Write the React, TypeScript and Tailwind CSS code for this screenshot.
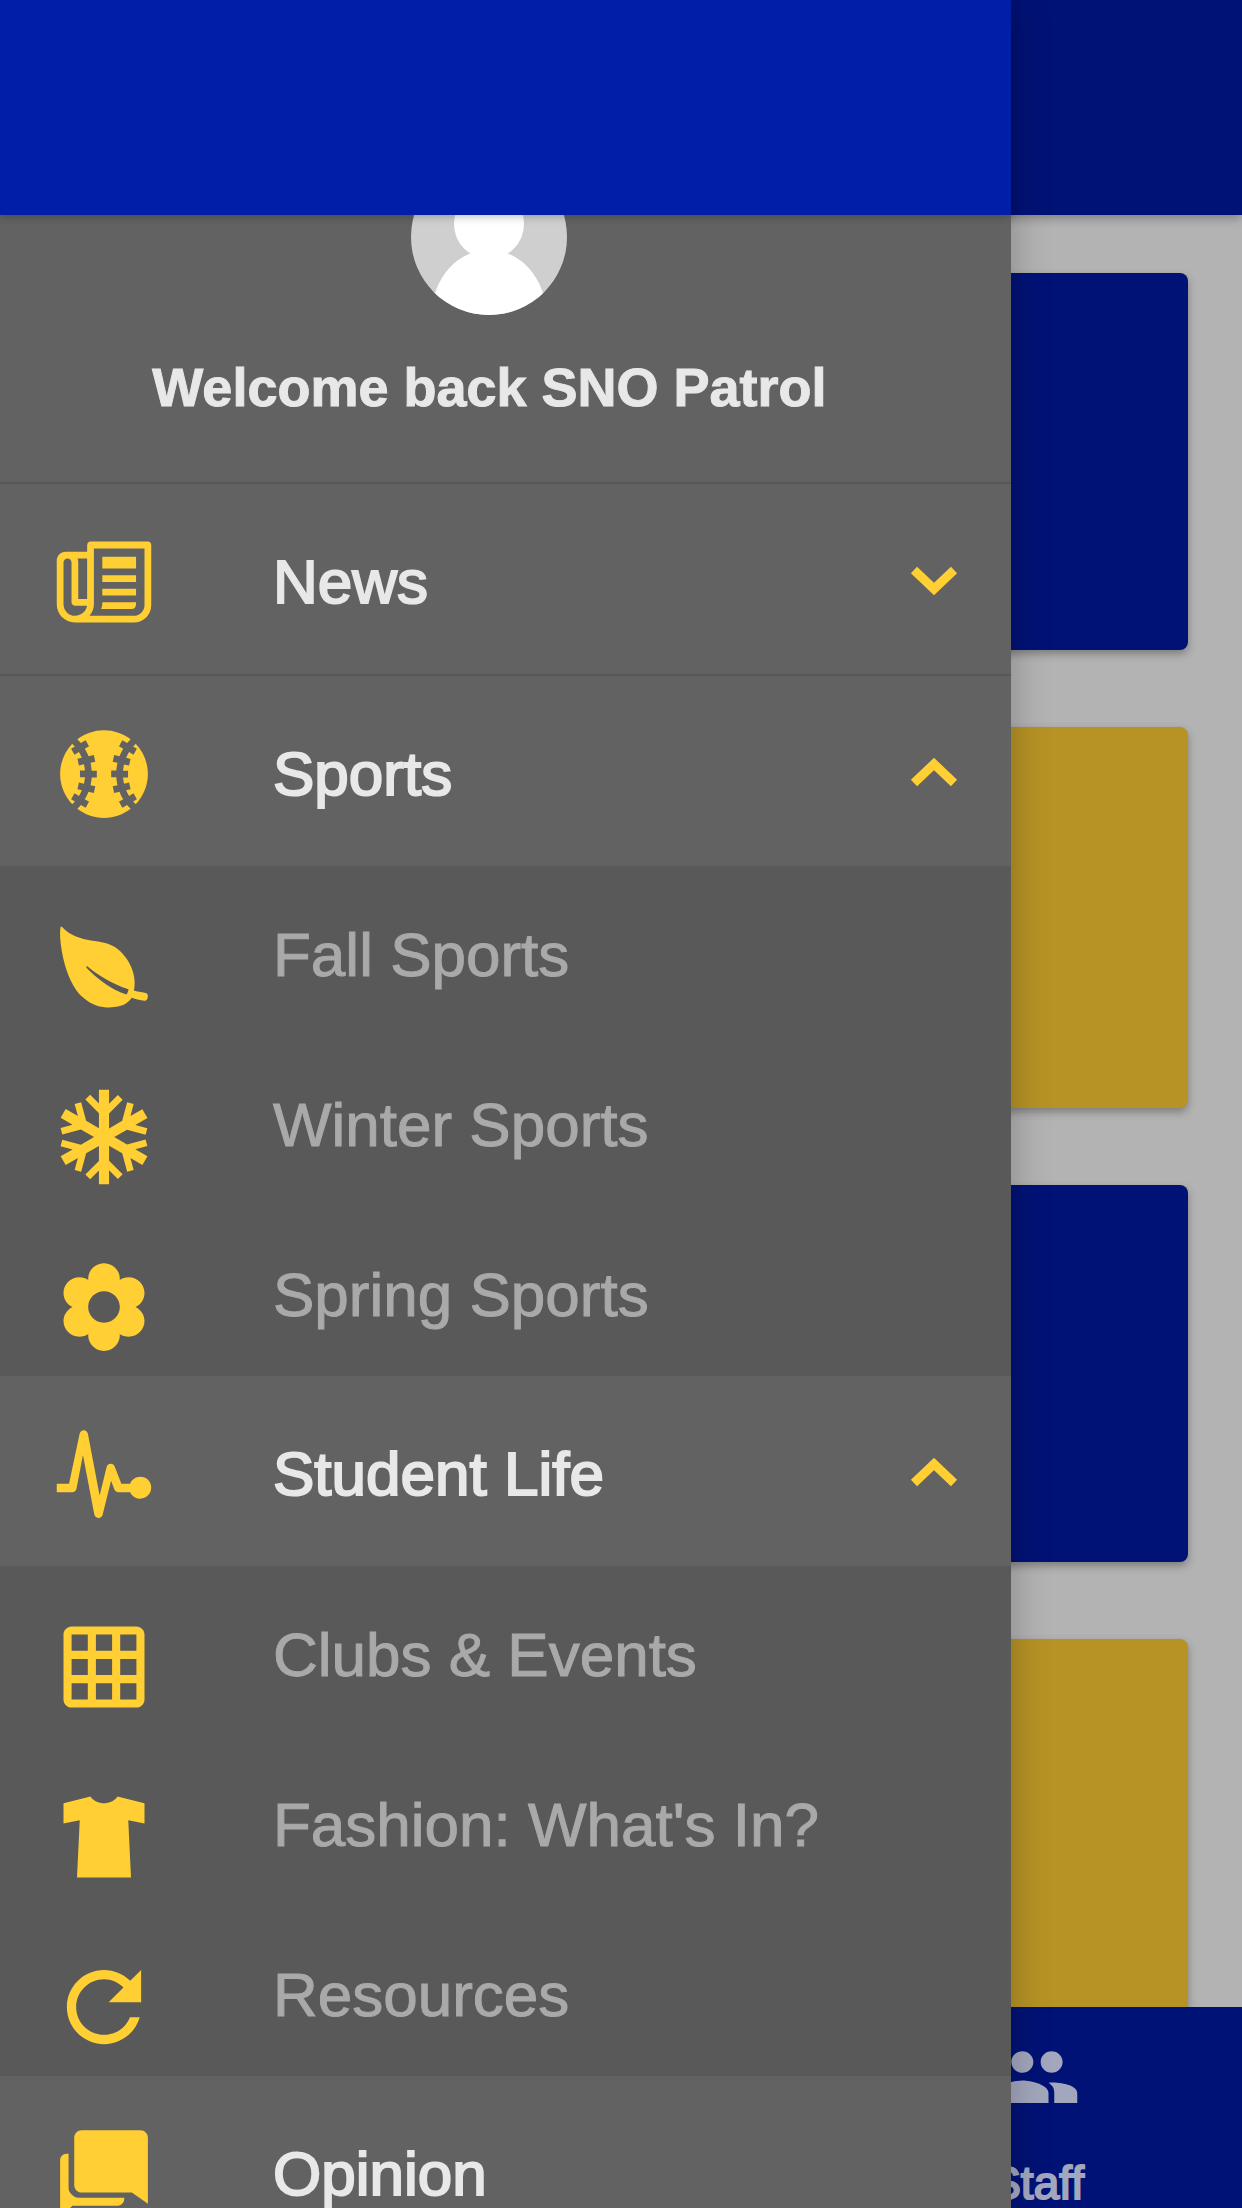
import { useState } from 'react';
import type { IconType } from 'react-icons';
import {
  IoIosLeaf,
  IoMdBaseball,
  IoMdChatbubbles,
  IoMdFlower,
  IoMdGrid,
  IoMdPaper,
  IoMdPeople,
  IoMdPulse,
  IoMdRefresh,
  IoMdShirt,
  IoMdSnow,
} from 'react-icons/io';

type MenuItem = {
  label: string;
  icon: IconType;
  children?: { label: string; icon: IconType }[];
};

const menu: MenuItem[] = [
  { label: 'News', icon: IoMdPaper, children: [] },
  {
    label: 'Sports',
    icon: IoMdBaseball,
    children: [
      { label: 'Fall Sports', icon: IoIosLeaf },
      { label: 'Winter Sports', icon: IoMdSnow },
      { label: 'Spring Sports', icon: IoMdFlower },
    ],
  },
  {
    label: 'Student Life',
    icon: IoMdPulse,
    children: [
      { label: 'Clubs & Events', icon: IoMdGrid },
      { label: "Fashion: What's In?", icon: IoMdShirt },
      { label: 'Resources', icon: IoMdRefresh },
    ],
  },
  { label: 'Opinion', icon: IoMdChatbubbles },
];

function Chevron({ open }: { open: boolean }) {
  return (
    <svg viewBox="0 0 48 32" className="h-8 w-12 shrink-0" fill="none" stroke="#ffcf33" strokeWidth="9" aria-hidden="true">
      <path d={open ? 'M4 25 24 6 44 25' : 'M4 4 24 23 44 4'} />
    </svg>
  );
}

function Avatar() {
  return (
    <svg viewBox="0 0 156 156" className="-mt-14 size-[156px]" role="img" aria-label="Profile">
      <clipPath id="avatar">
        <circle cx="78" cy="78" r="78" />
      </clipPath>
      <g clipPath="url(#avatar)">
        <rect width="156" height="156" fill="#cfcfcf" />
        <circle cx="78" cy="65" r="35" fill="#fff" />
        <ellipse cx="78" cy="155" rx="57" ry="64" fill="#fff" />
      </g>
    </svg>
  );
}

function MenuGroup({ item }: { item: MenuItem }) {
  const hasItems = !!item.children?.length;
  const [open, setOpen] = useState(hasItems);
  const Icon = item.icon;

  return (
    <li className={open ? '' : 'border-b-2 border-[#575757]'}>
      <button
        type="button"
        aria-expanded={item.children ? open : undefined}
        onClick={() => setOpen(!open)}
        className="flex h-[190px] w-full items-center pt-1.5 pr-[53px] pl-[50px] text-left text-[#e8e8e8]"
      >
        <Icon className="size-[108px] shrink-0 text-[#ffcf33]" />
        <span className="ml-[115px] flex-1 [-webkit-text-stroke:2px]">{item.label}</span>
        {item.children && <Chevron open={open} />}
      </button>
      {open && hasItems && (
        <ul className="bg-[#595959]">
          {item.children?.map(({ label, icon: SubIcon }) => (
            <li key={label}>
              <a href="#" className="flex h-[170px] items-center pt-2 pl-[50px] text-[#a9a9a9]">
                <span className="shrink-0 pt-6 text-[#ffcf33]">
                  <SubIcon className="size-[108px]" />
                </span>
                <span className="ml-[115px] [-webkit-text-stroke:1px]">{label}</span>
              </a>
            </li>
          ))}
        </ul>
      )}
    </li>
  );
}

export default function App() {
  return (
    <div className="relative flex h-screen flex-col overflow-hidden bg-[#b3b3b3] font-['Liberation_Sans',Arial,sans-serif]">
      <header className="relative h-[215px] shrink-0 bg-[#001276] shadow-[0_3px_10px_rgba(0,0,0,0.3)]" />

      <main className="flex min-h-0 flex-1 flex-col gap-[77px] overflow-hidden px-[54px] pt-[58px]">
        <div className="h-[377px] shrink-0 rounded-lg bg-[#001276] shadow-[0_4px_8px_rgba(0,0,0,0.3)]" />
        <div className="h-[381px] shrink-0 rounded-lg bg-[#b79325] shadow-[0_4px_8px_rgba(0,0,0,0.3)]" />
        <div className="h-[377px] shrink-0 rounded-lg bg-[#001276] shadow-[0_4px_8px_rgba(0,0,0,0.3)]" />
        <div className="h-[381px] shrink-0 rounded-lg bg-[#b79325] shadow-[0_4px_8px_rgba(0,0,0,0.3)]" />
      </main>

      <footer className="flex h-[201px] shrink-0 justify-end bg-[#001276]">
        <button type="button" className="flex w-[33%] flex-col items-center justify-between pt-6 text-[46px] leading-[50px] text-[#a3a7bd]">
          <IoMdPeople className="size-[92px]" />
          <span className="[-webkit-text-stroke:2px]">Staff</span>
        </button>
      </footer>

      <aside className="absolute inset-y-0 left-0 flex w-[81.4%] flex-col bg-[#626262] shadow-[0_0_36px_rgba(0,0,0,0.25)]">
        <div className="relative z-10 h-[215px] shrink-0 bg-[#001ea8] shadow-[0_2px_8px_rgba(0,0,0,0.25)]" />
        <div className="min-h-0 flex-1 overflow-hidden">
          <div className="flex h-[269px] flex-col items-center border-b-2 border-[#575757] pr-8">
            <Avatar />
            <p className="mt-10 text-[54px] leading-[64px] font-bold text-[#e8e8e8] [-webkit-text-stroke:1px]">Welcome back SNO Patrol</p>
          </div>
          <nav>
            <ul className="text-[62px] leading-[72px]">
              {menu.map((item) => (
                <MenuGroup key={item.label} item={item} />
              ))}
            </ul>
          </nav>
        </div>
      </aside>
    </div>
  );
}
